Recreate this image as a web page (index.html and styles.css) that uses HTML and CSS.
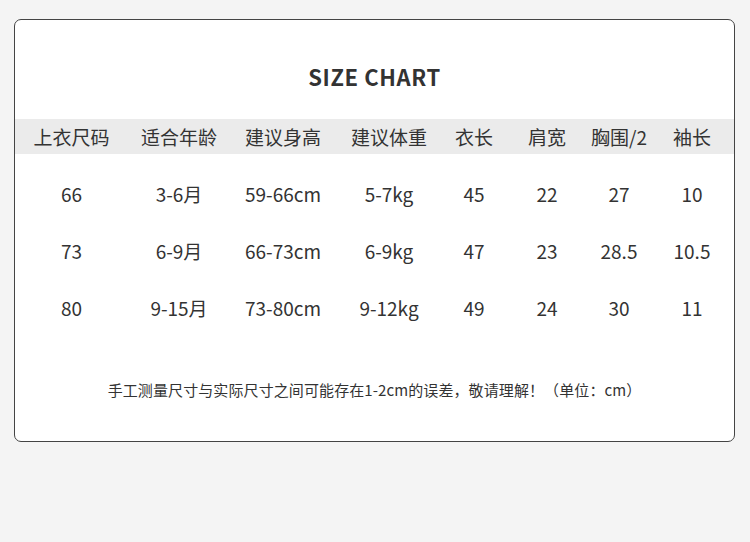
FILE: index.html
```html
<!DOCTYPE html>
<html lang="zh">
<head>
<meta charset="utf-8">
<title>Size Chart</title>
<link rel="stylesheet" href="styles.css">
</head>
<body>
<div class="card">
  <h1 class="title">SIZE CHART</h1>
  <div class="table">
    <div class="row head">
      <span>上衣尺码</span><span>适合年龄</span><span>建议身高</span><span>建议体重</span><span>衣长</span><span>肩宽</span><span>胸围/2</span><span>袖长</span>
    </div>
    <div class="body">
      <div class="row">
        <span>66</span><span>3-6月</span><span>59-66cm</span><span>5-7kg</span><span>45</span><span>22</span><span>27</span><span>10</span>
      </div>
      <div class="row">
        <span>73</span><span>6-9月</span><span>66-73cm</span><span>6-9kg</span><span>47</span><span>23</span><span>28.5</span><span>10.5</span>
      </div>
      <div class="row">
        <span>80</span><span>9-15月</span><span>73-80cm</span><span>9-12kg</span><span>49</span><span>24</span><span>30</span><span>11</span>
      </div>
    </div>
  </div>
  <p class="note">手工测量尺寸与实际尺寸之间可能存在1-2cm的误差，敬请理解！（单位：cm）</p>
</div>
</body>
</html>
```

FILE: styles.css
```css
html, body {
  margin: 0;
  padding: 0;
}
body {
  background: #f4f4f4;
  width: 750px;
  height: 542px;
  font-family: "Noto Sans CJK SC", "Noto Sans", sans-serif;
  color: #333;
  padding-top: 19px;
  box-sizing: border-box;
}
.card {
  margin-left: 14px;
  width: 721px;
  height: 423px;
  box-sizing: border-box;
  border: 1px solid #444;
  border-radius: 7px;
  background: #fff;
  overflow: hidden;
  display: flex;
  flex-direction: column;
}
.title {
  margin: 41px 0 28px;
  height: 30px;
  line-height: 30px;
  font-size: 22px;
  font-weight: 700;
  text-align: center;
  color: #333;
  letter-spacing: 0.6px;
}
.row {
  display: grid;
  grid-template-columns: 113px 102px 106px 106px 64px 82px 62px 84px;
  height: 57px;
  align-items: center;
  font-size: 19px;
  text-align: center;
}
.row span {
  white-space: nowrap;
}
.row.head {
  height: 35px;
  background: #ebebeb;
}
.body {
  padding-top: 11px;
}
.note {
  margin: 41px 0 0;
  line-height: 26px;
  font-size: 15px;
  text-align: center;
  color: #333;
  letter-spacing: 0.1px;
}
```
